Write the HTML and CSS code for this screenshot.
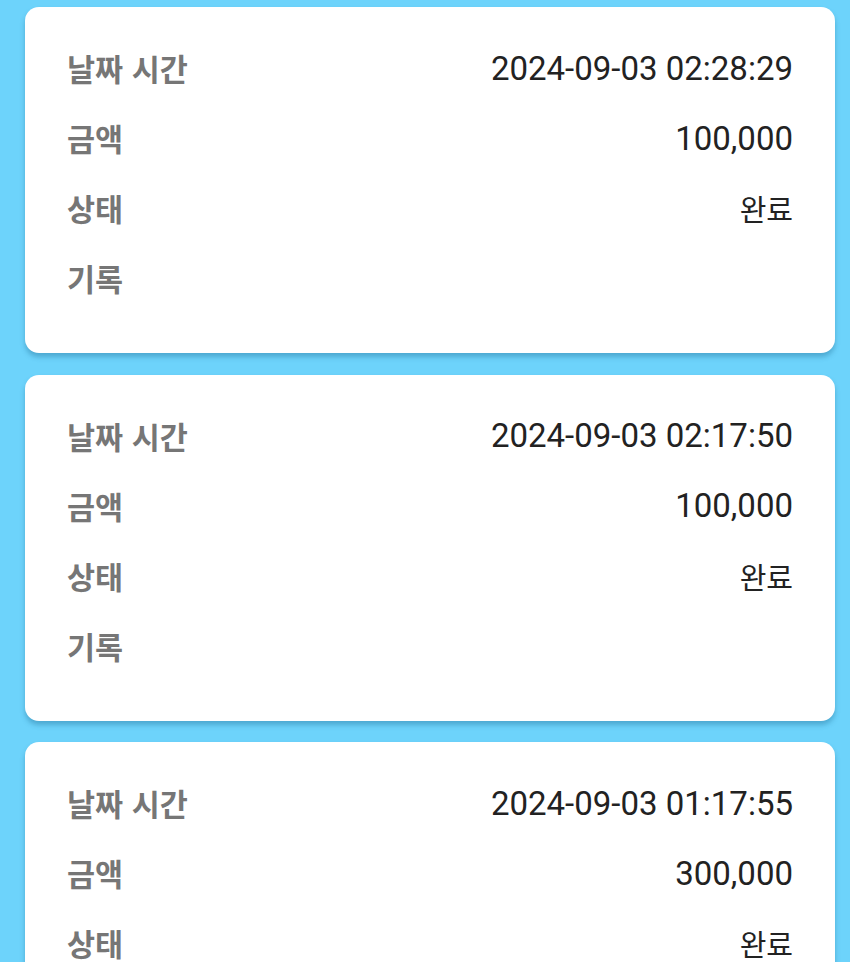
FILE: index.html
```html
<!DOCTYPE html>
<html lang="ko">
<head>
    <meta charset="UTF-8">
    <meta name="viewport" content="width=device-width, initial-scale=1.0">
    <title>기록</title>
    <link rel="stylesheet" href="styles.css">
</head>
<body>
    <main class="list">
        <div class="card">
            <div class="row"><span class="label">날짜 시간</span><span class="value">2024-09-03 02:28:29</span></div>
            <div class="row"><span class="label">금액</span><span class="value">100,000</span></div>
            <div class="row"><span class="label">상태</span><span class="value ko">완료</span></div>
            <div class="row"><span class="label">기록</span><span class="value"></span></div>
        </div>

        <div class="card">
            <div class="row"><span class="label">날짜 시간</span><span class="value">2024-09-03 02:17:50</span></div>
            <div class="row"><span class="label">금액</span><span class="value">100,000</span></div>
            <div class="row"><span class="label">상태</span><span class="value ko">완료</span></div>
            <div class="row"><span class="label">기록</span><span class="value"></span></div>
        </div>

        <div class="card">
            <div class="row"><span class="label">날짜 시간</span><span class="value">2024-09-03 01:17:55</span></div>
            <div class="row"><span class="label">금액</span><span class="value">300,000</span></div>
            <div class="row"><span class="label">상태</span><span class="value ko">완료</span></div>
            <div class="row"><span class="label">기록</span><span class="value"></span></div>
        </div>
    </main>
</body>
</html>
```

FILE: styles.css
```css
* {
    box-sizing: border-box;
    margin: 0;
    padding: 0;
}

body {
    font-family: Roboto, 'Noto Sans CJK KR', sans-serif;
    background-color: #6dd3fb;
    color: #222;
    height: 962px;
    overflow: hidden;
}

.list {
    display: flex;
    flex-direction: column;
    gap: 21.5px;
    padding: 7px 15px 0 25px;
}

.card {
    background: #fff;
    border-radius: 14px;
    height: 346px;
    flex-shrink: 0;
    padding: 26px 42px 40px 42px;
    box-shadow: 0 4px 5px rgba(40, 120, 160, 0.45);
}

.row {
    display: flex;
    justify-content: space-between;
    align-items: center;
    height: 70px;
}

.label {
    font-family: 'Noto Sans CJK KR', sans-serif;
    font-weight: bold;
    font-size: 30.5px;
    color: #767676;
}

.value {
    font-family: Roboto, 'Noto Sans CJK KR', sans-serif;
    font-size: 33px;
    color: #222;
}

.value.ko {
    font-family: 'Noto Sans CJK KR', sans-serif;
    font-size: 29px;
}
```
